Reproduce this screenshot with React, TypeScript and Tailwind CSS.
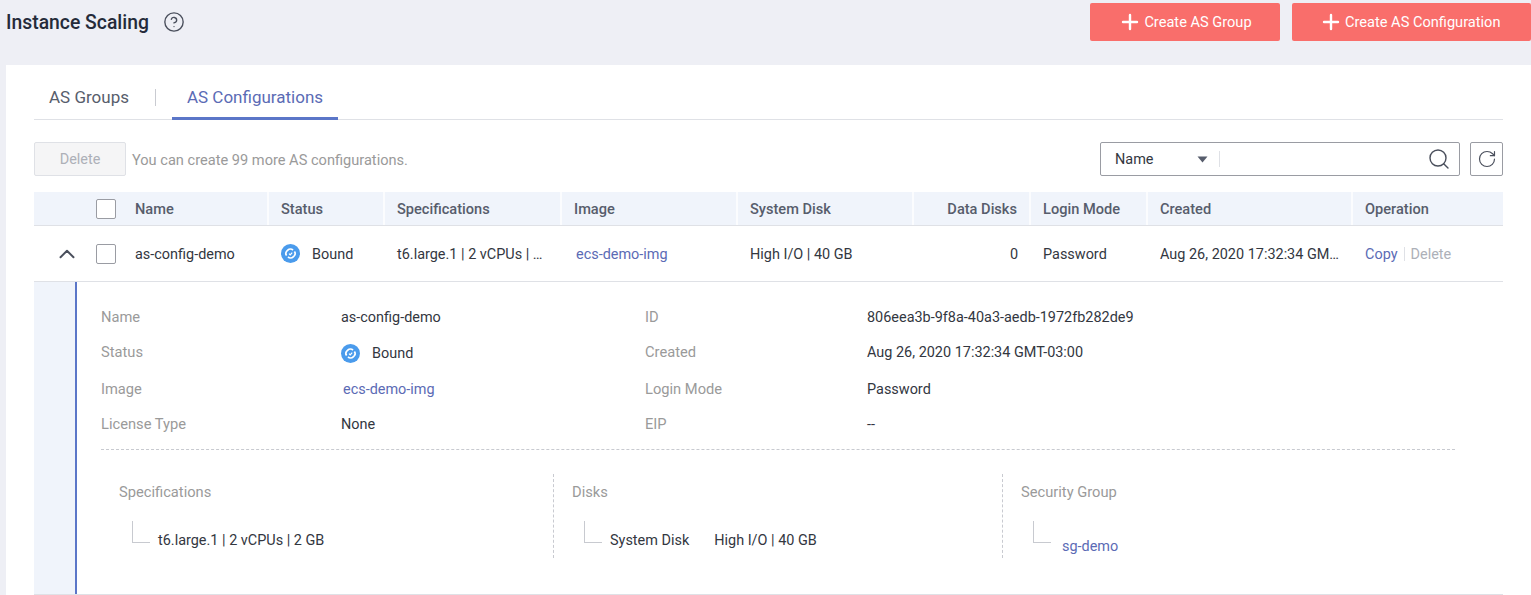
import { ChevronUp, CircleHelp, Plus, RotateCw, Search } from "lucide-react";

const columns = "grid grid-cols-[233px_116px_177px_176px_176px_117px_117px_205px_152px]";

function Checkbox() {
  return <span className="block w-5 h-5 rounded-[2px] border border-[#9a9ca3] bg-white" />;
}

function BoundIcon() {
  return (
    <svg width="19" height="19" viewBox="0 0 19 19" className="shrink-0">
      <circle cx="9.5" cy="9.5" r="9.5" fill="#4a9bec" />
      <path d="M5.6 11.6a3.6 3.6 0 0 1 .3-4.6l.9-.9a3.6 3.6 0 0 1 5.2 0" fill="none" stroke="#fff" strokeWidth="1.7" />
      <path d="M13.4 7.4a3.6 3.6 0 0 1-.3 4.6l-.9.9a3.6 3.6 0 0 1-5.2 0" fill="none" stroke="#fff" strokeWidth="1.7" />
      <path d="M8 9.6l1.2 1.2 2-2.2" fill="none" stroke="#fff" strokeWidth="1.2" />
    </svg>
  );
}

function HeaderCell({ label, right }: { label: string; right?: boolean }) {
  return (
    <div
      className={`flex items-center pt-[2px] font-medium text-[14.6px] text-[#575d6c] border-l-2 border-white/70 ${
        right ? "justify-end pr-3" : "pl-3"
      }`}
    >
      {label}
    </div>
  );
}

function Branch({ className = "h-[22px]" }: { className?: string }) {
  return <span className={`block w-[18px] border-l border-b border-[#c8cad0] shrink-0 ${className}`} />;
}

function Label({ children }: { children: React.ReactNode }) {
  return <div className="text-[14.7px] text-[#9a9a9a]">{children}</div>;
}

function Link({ children, className = "" }: { children: React.ReactNode; className?: string }) {
  return <span className={`text-[#5b6bb5] ${className}`}>{children}</span>;
}

function Field({ children, className = "" }: { children: React.ReactNode; className?: string }) {
  return <div className={`flex items-center ${className}`}>{children}</div>;
}

function CreateButton({ label, className }: { label: string; className: string }) {
  return (
    <button className={`h-[38px] rounded-[2px] bg-[#f96e6b] text-[14.6px] text-white flex items-center ${className}`}>
      <Plus size={24} strokeWidth={2.4} className="mr-[2px]" />
      <span className="pt-[2px]">{label}</span>
    </button>
  );
}

export default function App() {
  return (
    <div
      className="w-[1531px] h-[595px] overflow-hidden bg-[#eeeff5] text-[14.45px] text-[#33373f]"
      style={{ fontFamily: "Roboto, sans-serif" }}
    >
      <header className="h-[65px] flex justify-between pt-[3px] pl-[6px]">
        <div className="flex items-center h-[38px]">
          <h1 className="pt-[2px] text-[19.35px] font-medium text-[#252b3a]">Instance Scaling</h1>
          <CircleHelp size={22} strokeWidth={1.5} className="ml-[14px] text-[#4a4f5c]" />
        </div>
        <div className="flex gap-3 w-[441px] shrink-0">
          <CreateButton label="Create AS Group" className="w-[190px] justify-center" />
          <CreateButton label="Create AS Configuration" className="w-[239px] pl-[27px] shrink-0" />
        </div>
      </header>

      <main className="ml-[6px] h-[530px] bg-white px-[28px]">
        <div className="h-[55px] flex items-end border-b border-[#dfe1e6]">
          <span className="w-[122px] pl-[15px] h-full flex items-center pt-[12px] text-[17px] text-[#575d6c] relative">
            AS Groups
            <span className="absolute right-0 top-[24px] h-[17px] w-px bg-[#c9cbd1]" />
          </span>
          <span className="ml-[16px] w-[166px] h-full flex items-center justify-center pt-[12px] text-[17px] text-[#5b6bb5] border-b-[3px] border-[#5b76c8] -mb-px">
            AS Configurations
          </span>
        </div>

        <div className="mt-[22px] h-[34px] flex items-center">
          <button className="w-[92px] h-full pt-[2px] rounded-[2px] border border-[#dfe1e6] bg-[#f5f5f6] text-[#adb0b8]">
            Delete
          </button>
          <span className="ml-[6px] mt-[3px] text-[14.6px] text-[#9a9a9a]">You can create 99 more AS configurations.</span>
          <div className="ml-auto w-[360px] h-full flex items-center rounded-[2px] border border-[#9a9ca3] pl-[14px] pr-[8px]">
            <span className="w-[82px] pt-[2px]">Name</span>
            <svg width="11" height="7" viewBox="0 0 11 7">
              <path d="M0.5 0.5h10L5.5 6.5z" fill="#575d6c" />
            </svg>
            <span className="ml-[11px] h-[16px] w-px bg-[#dfe1e6]" />
            <Search size={24} strokeWidth={1.4} className="ml-auto text-[#4a4f5c]" />
          </div>
          <div className="ml-[10px] w-[33px] h-full flex items-center justify-center rounded-[2px] border border-[#9a9ca3]">
            <RotateCw size={20} strokeWidth={1.4} className="text-[#4a4f5c]" />
          </div>
        </div>

        <div className={`${columns} mt-[16px] h-[34px] bg-[#f0f4fb] border-b border-[#dfe1e6]`}>
          <div className="flex items-center pl-[62px]">
            <Checkbox />
            <span className="ml-[19px] pt-[2px] font-medium text-[14.6px] text-[#575d6c]">Name</span>
          </div>
          <HeaderCell label="Status" />
          <HeaderCell label="Specifications" />
          <HeaderCell label="Image" />
          <HeaderCell label="System Disk" />
          <HeaderCell label="Data Disks" right />
          <HeaderCell label="Login Mode" />
          <HeaderCell label="Created" />
          <HeaderCell label="Operation" />
        </div>

        <div className={`${columns} h-[56px] border-b border-[#dfe1e6] items-center whitespace-nowrap`}>
          <div className="flex items-center pl-[20px]">
            <ChevronUp size={26} strokeWidth={1.8} className="text-[#4a4f5c]" />
            <span className="ml-[16px]">
              <Checkbox />
            </span>
            <span className="ml-[19px] pt-[2px]">as-config-demo</span>
          </div>
          <div className="flex items-center pl-[14px]">
            <BoundIcon />
            <span className="ml-[12px] mt-[2px]">Bound</span>
          </div>
          <div className="pl-[14px] pt-[2px]">t6.large.1 | 2 vCPUs | …</div>
          <div className="pl-[16px] pt-[2px]">
            <Link>ecs-demo-img</Link>
          </div>
          <div className="pl-[14px] pt-[2px]">High I/O | 40 GB</div>
          <div className="text-right pr-[11px] pt-[2px]">0</div>
          <div className="pl-[14px] pt-[2px]">Password</div>
          <div className="pl-[14px] pt-[2px]">Aug 26, 2020 17:32:34 GM…</div>
          <div className="pl-[14px] pt-[2px] flex items-center">
            <Link>Copy</Link>
            <span className="mx-[6px] h-[14px] w-px bg-[#dfe1e6]" />
            <span className="text-[#adb0b8]">Delete</span>
          </div>
        </div>

        <div className="h-[313px] flex bg-[#f0f4fb] border-b border-[#dfe1e6]">
          <div className="ml-[41px] flex-1 bg-white border-l-2 border-[#5b76c8] pl-[24px] pr-[48px] pt-[17px]">
            <div className="grid grid-cols-[240px_304px_222px_1fr] grid-rows-[36px_36px_36px_35px]">
              <Field><Label>Name</Label></Field>
              <Field className="pt-[2px]">as-config-demo</Field>
              <Field><Label>ID</Label></Field>
              <Field className="pt-[2px]">806eea3b-9f8a-40a3-aedb-1972fb282de9</Field>

              <Field className="pb-[2px]"><Label>Status</Label></Field>
              <Field>
                <BoundIcon />
                <span className="ml-[12px] mt-[2px]">Bound</span>
              </Field>
              <Field className="pb-[2px]"><Label>Created</Label></Field>
              <Field>Aug 26, 2020 17:32:34 GMT-03:00</Field>

              <Field><Label>Image</Label></Field>
              <Field className="pl-[2px] pt-[2px]"><Link>ecs-demo-img</Link></Field>
              <Field><Label>Login Mode</Label></Field>
              <Field className="pt-[2px]">Password</Field>

              <Field><Label>License Type</Label></Field>
              <Field>None</Field>
              <Field><Label>EIP</Label></Field>
              <Field>--</Field>
            </div>

            <div className="mt-[7px] border-t border-dashed border-[#c8cad0]" />

            <div className="mt-[24px] h-[84px] grid grid-cols-[452px_449px_1fr]">
              <div className="pl-[18px] pt-[7px]">
                <Label>Specifications</Label>
                <div className="mt-[18px] ml-[13px] flex items-end">
                  <Branch />
                  <span className="ml-[8px] -mb-[9px]">t6.large.1 | 2 vCPUs | 2 GB</span>
                </div>
              </div>
              <div className="pl-[18px] pt-[7px] border-l border-dashed border-[#c8cad0]">
                <Label>Disks</Label>
                <div className="mt-[18px] ml-[12px] flex items-end">
                  <Branch />
                  <span className="ml-[8px] -mb-[9px]">System Disk</span>
                  <span className="ml-[25px] -mb-[9px]">High I/O | 40 GB</span>
                </div>
              </div>
              <div className="pl-[18px] pt-[7px] border-l border-dashed border-[#c8cad0]">
                <Label>Security Group</Label>
                <div className="mt-[18px] ml-[12px] flex items-end">
                  <Branch />
                  <Link className="ml-[11px] -mb-[15px]">sg-demo</Link>
                </div>
              </div>
            </div>
          </div>
        </div>
      </main>
    </div>
  );
}
